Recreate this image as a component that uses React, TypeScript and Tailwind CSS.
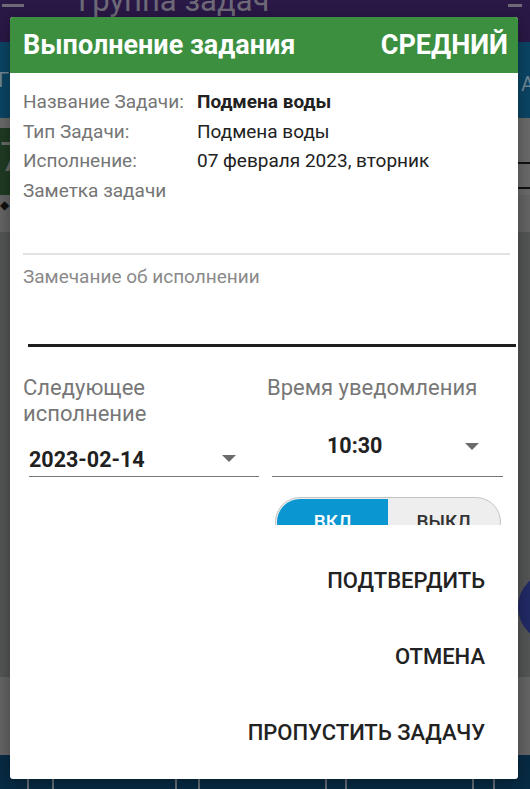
import React from "react";

function Tri() {
  return (
    <svg width="14" height="7" viewBox="0 0 14 7" className="shrink-0">
      <polygon points="0,0 14,0 7,7" fill="#6b6b6b" />
    </svg>
  );
}

export default function App() {
  return (
    <div className="relative w-[530px] h-[789px] overflow-hidden font-['Roboto',sans-serif]">
      {/* background app (dimmed) */}
      <div className="flex flex-col h-full">
        <div className="h-[42px] shrink-0 bg-[#2a1846] flex items-start overflow-hidden">
          <div className="w-[22px] h-[3px] mt-[4px] ml-[2px] bg-[#6e6a78]" />
          <div className="ml-[54px] -mt-[15px] text-[31px] leading-[31px] text-[#6e6a78]">Группа задач</div>
          <div className="ml-auto mr-[8px] w-[14px] h-[3px] mt-[4px] bg-[#6e6a78]" />
        </div>
        <div className="h-[76px] shrink-0 bg-[#0b4564] flex items-center justify-between text-[20px] text-[#6f8795] overflow-hidden">
          <span className="-ml-[2px]">Г</span>
          <span className="-mr-[4px] mt-[8px]">А</span>
        </div>
        <div className="h-[10px] shrink-0 bg-[#6a6a6a]" />
        <div className="h-[67px] shrink-0 flex">
          <div className="w-[12px] bg-[#1f3b22] text-[#6b6b6b] text-[40px] leading-[60px] overflow-hidden">7</div>
          <div className="flex-1 bg-[#6a6a6a]" />
          <div className="w-[12px] bg-[#6a6a6a] flex flex-col">
            <div className="h-[34px]" />
            <div className="h-[2px] bg-[#111]" />
            <div className="h-[23px]" />
            <div className="h-[2px] bg-[#111]" />
          </div>
        </div>
        <div className="h-[37px] shrink-0 bg-[#656565] flex items-start">
          <span className="text-[#111] text-[12px] leading-[12px] mt-[4px]">◆</span>
        </div>
        <div className="h-[445px] shrink-0 bg-[#545556]" />
        <div className="h-[78px] shrink-0 bg-[#656565]" />
        <div className="flex-1 bg-[#072b44] flex items-end">
          <div className="ml-[27px] w-[27px] h-[20px] border-2 border-[#66707a] border-b-0" />
          <div className="ml-[121px] w-[25px] h-[20px] border-2 border-[#66707a] border-b-0" />
          <div className="ml-[125px] w-[22px] h-[20px] rounded-t-full border-2 border-[#66707a] border-b-0" />
          <div className="ml-[125px] w-[23px] h-[20px] border-2 border-[#66707a] border-b-0" />
        </div>
      </div>
      {/* FAB glimpse */}
      <div className="absolute left-[518px] top-[572px] w-[70px] h-[70px] rounded-full bg-[#222a66]" />

      {/* dialog */}
      <div className="absolute left-[10px] top-[17px] w-[508px] h-[762px] bg-white rounded-[3px] flex flex-col overflow-hidden shadow-[0_4px_16px_rgba(0,0,0,0.35)]">
        <div className="h-[56px] shrink-0 bg-[#3b8f3f] flex items-center justify-between pl-[13px] pr-[10px] text-white font-bold text-[27px] leading-[32px]">
          <span>Выполнение задания</span>
          <span>СРЕДНИЙ</span>
        </div>
        <div className="h-[452px] shrink-0 overflow-hidden pl-[13px] pt-[14px] flex flex-col">
          <div className="grid grid-cols-[174px_1fr] text-[19px] leading-[29.5px]">
            <span className="text-[#757575]">Название Задачи:</span>
            <span className="font-bold text-[#212121]">Подмена воды</span>
            <span className="text-[#757575]">Тип Задачи:</span>
            <span className="text-[#212121]">Подмена воды</span>
            <span className="text-[#757575]">Исполнение:</span>
            <span className="text-[#212121]">07 февраля 2023, вторник</span>
            <span className="text-[#757575] col-span-2">Заметка задачи</span>
          </div>
          <div className="mt-[48px] mr-[8px] h-[2px] shrink-0 bg-[#e2e2e2]" />
          <div className="mt-[10px] text-[19px] leading-[24px] text-[#8a8a8a]">Замечание об исполнении</div>
          <div className="mt-[55px] ml-[5px] mr-[2px] h-[3px] shrink-0 bg-[#1e1e1e]" />
          <div className="mt-[28px] grid grid-cols-[236px_236px] gap-x-[8px]">
            <div className="flex flex-col">
              <div className="text-[22px] leading-[26px] text-[#777777]">
                Следующее
                <br />
                исполнение
              </div>
              <div className="ml-[6px] h-[50px] flex flex-col justify-end border-b-[1.5px] border-[#777777]">
                <div className="flex items-center justify-between pr-[23px] pb-[4px]">
                  <span className="text-[21.5px] leading-[24px] font-bold text-[#212121]">2023-02-14</span>
                  <span className="-translate-y-[2px]"><Tri /></span>
                </div>
              </div>
            </div>
            <div className="flex flex-col">
              <div className="text-[22px] leading-[26px] text-[#777777]">Время уведомления</div>
              <div className="ml-[5px] h-[76px] flex flex-col border-b-[1.5px] border-[#777777]">
                <div className="mt-[33px] flex items-center justify-between pl-[55px] pr-[24px]">
                  <span className="text-[21.5px] leading-[24px] font-bold text-[#212121]">10:30</span>
                  <Tri />
                </div>
              </div>
              <div className="mt-[20px] ml-[8px] w-[226px] h-[50px] shrink-0 rounded-full border-[1.5px] border-[#c4c4c4] bg-[#eeeeee] p-[1px] flex">
                <div className="w-[111px] h-full rounded-l-full rounded-r-[14px] bg-[#0a96d1] text-white flex items-center justify-center text-[19px] font-medium">ВКЛ</div>
                <div className="flex-1 flex items-center justify-center text-[19px] font-medium text-[#333]">ВЫКЛ</div>
              </div>
            </div>
          </div>
        </div>
        <div className="pt-[17px] flex flex-col text-[22px] font-medium text-[#222222]">
          <div className="h-[76px] flex items-center justify-end pr-[33px]">ПОДТВЕРДИТЬ</div>
          <div className="h-[76px] flex items-center justify-end pr-[33px]">ОТМЕНА</div>
          <div className="h-[76px] flex items-center justify-end pr-[33px]">ПРОПУСТИТЬ ЗАДАЧУ</div>
        </div>
      </div>
    </div>
  );
}
